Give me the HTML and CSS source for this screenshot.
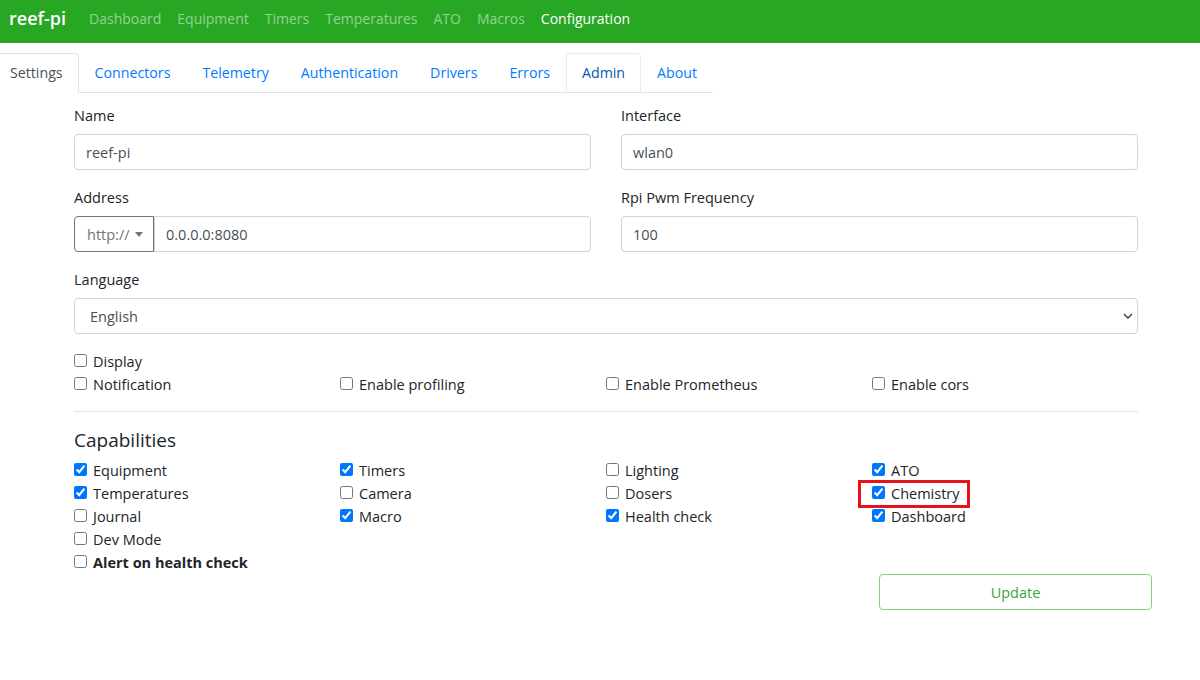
FILE: index.html
```html
<!DOCTYPE html>
<html>
<head>
  <title>reef-pi - Configuration</title>
  <link rel="stylesheet" href="styles.css">
</head>
<body>
  <nav class="navbar">
    <span class="brand">reef-pi</span>
    <ul class="nav-links">
      <li><a href="#">Dashboard</a></li>
      <li><a href="#">Equipment</a></li>
      <li><a href="#">Timers</a></li>
      <li><a href="#">Temperatures</a></li>
      <li><a href="#">ATO</a></li>
      <li><a href="#">Macros</a></li>
      <li><a href="#" class="active">Configuration</a></li>
    </ul>
  </nav>

  <!-- configuration sub sections -->
  <ul class="tabs">
    <li><a href="#" class="active">Settings</a></li>
    <li><a href="#">Connectors</a></li>
    <li><a href="#">Telemetry</a></li>
    <li><a href="#">Authentication</a></li>
    <li><a href="#">Drivers</a></li>
    <li><a href="#">Errors</a></li>
    <li><a href="#" class="hover">Admin</a></li>
    <li><a href="#">About</a></li>
  </ul>

  <form class="settings">
    <div class="form-row">
      <div class="field">
        <label>Name</label>
        <input class="text-input" type="text" value="reef-pi">
      </div>
      <div class="field">
        <label>Interface</label>
        <input class="text-input" type="text" value="wlan0">
      </div>
    </div>

    <div class="form-row">
      <div class="field">
        <label>Address</label>
        <div class="input-group">
          <button type="button" class="protocol">http:// <span class="caret"></span></button>
          <input class="text-input" type="text" value="0.0.0.0:8080">
        </div>
      </div>
      <div class="field">
        <label>Rpi Pwm Frequency</label>
        <input class="text-input" type="text" value="100">
      </div>
    </div>

    <div class="field">
      <label>Language</label>
      <div class="select">
        <span>English</span>
        <svg width="10" height="6" viewBox="0 0 10 6"><path d="M1 1l4 4 4-4" fill="none" stroke="#343a40" stroke-width="1.4"/></svg>
      </div>
    </div>

    <div class="checks">
      <label class="check wide"><input type="checkbox">Display</label>
      <label class="check"><input type="checkbox">Notification</label>
      <label class="check"><input type="checkbox">Enable profiling</label>
      <label class="check"><input type="checkbox">Enable Prometheus</label>
      <label class="check"><input type="checkbox">Enable cors</label>
    </div>

    <hr>

    <h4>Capabilities</h4>
    <div class="checks">
      <label class="check"><input type="checkbox" checked>Equipment</label>
      <label class="check"><input type="checkbox" checked>Timers</label>
      <label class="check"><input type="checkbox">Lighting</label>
      <label class="check"><input type="checkbox" checked>ATO</label>
      <label class="check"><input type="checkbox" checked>Temperatures</label>
      <label class="check"><input type="checkbox">Camera</label>
      <label class="check"><input type="checkbox">Dosers</label>
      <label class="check marked"><input type="checkbox" checked>Chemistry</label>
      <label class="check"><input type="checkbox">Journal</label>
      <label class="check"><input type="checkbox" checked>Macro</label>
      <label class="check"><input type="checkbox" checked>Health check</label>
      <label class="check"><input type="checkbox" checked>Dashboard</label>
      <label class="check"><input type="checkbox">Dev Mode</label>
    </div>
    <label class="check"><input type="checkbox"><b>Alert on health check</b></label>

    <div class="actions">
      <button type="button" class="update">Update</button>
    </div>
  </form>
</body>
</html>
```

FILE: styles.css
```css
body {
  margin: 0;
  font-family: "Open Sans", "Noto Sans", sans-serif;
  font-size: 14.5px;
  line-height: 23px;
  color: #212529;
  background: #fff;
}

a {
  text-decoration: none;
}

ul {
  list-style: none;
  margin: 0;
  padding: 0;
}

/* top bar */
.navbar {
  display: flex;
  align-items: center;
  box-sizing: border-box;
  height: 43px;
  padding: 0 9px 7px;
  background-color: #27a723;
}

.brand {
  color: #fff;
  font-size: 18px;
  font-weight: 600;
  margin-right: 15px;
}

.nav-links {
  display: flex;
  font-size: 14px;
}

.nav-links a {
  display: block;
  padding: 0 8px;
  color: rgba(255, 255, 255, 0.5);
}

.nav-links a.active {
  color: #fff;
}

/* tabs */
.tabs {
  display: flex;
  width: max-content;
  margin: 10px 0 0 -6px;
  border-bottom: 1px solid #dee2e6;
  font-size: 14.2px;
}

.tabs li {
  margin-bottom: -1px;
}

.tabs a {
  display: block;
  padding: 8px 15px;
  line-height: 22px;
  color: #007bff;
  border: 1px solid transparent;
  border-radius: 4px 4px 0 0;
}

.tabs a.active {
  color: #495057;
  background: #fff;
  border-color: #dee2e6 #dee2e6 #fff;
}

.tabs a.hover {
  color: #0056b3;
  border-color: #e9ecef #e9ecef #dee2e6;
}

/* form */
.settings {
  margin: 0 62px 0 74px;
  padding-top: 11px;
}

.form-row {
  display: grid;
  grid-template-columns: 1fr 1fr;
  column-gap: 30px;
}

.field {
  margin-bottom: 16px;
}

.field label {
  display: block;
  margin-bottom: 7px;
}

.text-input {
  display: block;
  box-sizing: border-box;
  width: 100%;
  height: 36px;
  padding: 0 11px;
  font: inherit;
  color: #495057;
  border: 1px solid #ced4da;
  border-radius: 4px;
}

.input-group {
  display: flex;
}

.input-group .text-input {
  flex: 1;
  border-radius: 0 4px 4px 0;
}

.protocol {
  flex: 0 0 80px;
  height: 36px;
  padding: 0 0 0 12px;
  font: inherit;
  color: #6c757d;
  background: #fff;
  border: 1px solid #6c757d;
  border-radius: 4px 0 0 4px;
  text-align: left;
}

.caret {
  display: inline-block;
  margin-left: 2px;
  vertical-align: 3px;
  border-top: 5px solid #6c757d;
  border-left: 4.5px solid transparent;
  border-right: 4.5px solid transparent;
}

.select {
  display: flex;
  align-items: center;
  justify-content: space-between;
  box-sizing: border-box;
  height: 36px;
  padding: 0 4px 0 15px;
  color: #495057;
  border: 1px solid #ced4da;
  border-radius: 4px;
}

/* checkbox grids */
.checks {
  display: grid;
  grid-template-columns: repeat(4, 1fr);
}

.check {
  display: flex;
  align-items: center;
}

.check.wide {
  grid-column: 1 / -1;
}

.check input {
  width: 13px;
  height: 13px;
  margin: -2px 6px 0 0;
}

.check.marked {
  position: relative;
  justify-self: start;
}

.check.marked::after {
  content: "";
  position: absolute;
  top: -2px;
  bottom: -3px;
  left: -14px;
  right: -10px;
  border: 3px solid #e4131b;
}

hr {
  margin: 15px 0 16px;
  border: 0;
  border-top: 1px solid rgba(0, 0, 0, 0.1);
}

h4 {
  margin: 0 0 7px;
  font-size: 19px;
  font-weight: 400;
  line-height: 24px;
}

.actions {
  display: flex;
  justify-content: flex-end;
  margin-right: -14px;
}

.update {
  width: 273px;
  height: 36px;
  font: inherit;
  color: #3aa63a;
  background: #fff;
  border: 1px solid #84d084;
  border-radius: 4px;
}
```
